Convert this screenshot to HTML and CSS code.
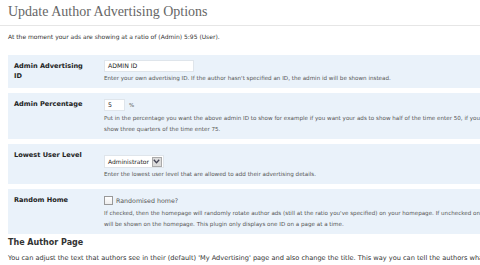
FILE: index.html
```html
<!DOCTYPE html>
<html>
<head>
<meta charset="utf-8">
<link rel="stylesheet" href="styles.css">
</head>
<body>
<div class="wrap">
  <h2 class="title">Update Author Advertising Options</h2>
  <p class="intro">At the moment your ads are showing at a ratio of (Admin) 5:95 (User).</p>
  <div class="form-table">
    <div class="row r1">
      <div class="label">Admin Advertising ID</div>
      <div class="field">
        <div class="input wide">ADMIN ID</div>
        <div class="desc">Enter your own advertising ID. If the author hasn't specified an ID, the admin id will be shown instead.</div>
      </div>
    </div>
    <div class="row r2">
      <div class="label">Admin Percentage</div>
      <div class="field">
        <div class="inline"><div class="input small">5</div><span class="unit">%</span></div>
        <div class="desc">Put in the percentage you want the above admin ID to show for example if you want your ads to show half of the time enter 50, if you want your ads to<br>show three quarters of the time enter 75.</div>
      </div>
    </div>
    <div class="row r3">
      <div class="label">Lowest User Level</div>
      <div class="field">
        <div class="select"><span class="sel-text">Administrator</span><span class="sel-btn"><svg width="7" height="5" viewBox="0 0 7 5"><path d="M0.8 0.8 L3.5 3.8 L6.2 0.8" fill="none" stroke="#445" stroke-width="1.3"/></svg></span></div>
        <div class="desc">Enter the lowest user level that are allowed to add their advertising details.</div>
      </div>
    </div>
    <div class="row r4">
      <div class="label">Random Home</div>
      <div class="field">
        <div class="inline"><span class="checkbox"></span><span class="cb-label">Randomised home?</span></div>
        <div class="desc">If checked, then the homepage will randomly rotate author ads (still at the ratio you've specified) on your homepage. If unchecked only the admin ID<br>will be shown on the homepage. This plugin only displays one ID on a page at a time.</div>
      </div>
    </div>
  </div>
  <h3 class="section">The Author Page</h3>
  <p class="outro">You can adjust the text that authors see in their (default) 'My Advertising' page and also change the title. This way you can tell the authors what to do.</p>
</div>
</body>
</html>
```
FILE: styles.css
```css
html, body {
  margin: 0;
  padding: 0;
  background: #fff;
  overflow: hidden;
}
.wrap {
  width: 472px;
  padding: 0 0 0 8px;
  font-family: "DejaVu Sans", Verdana, sans-serif;
  color: #333;
}
.title {
  margin: 0 0 0 -8px;
  padding: 4px 0 5px 8px;
  width: 480px;
  font-family: "Liberation Serif", "Times New Roman", serif;
  font-weight: normal;
  font-size: 14px;
  line-height: 16px;
  color: #666;
  border-bottom: 1px solid #e6e6e6;
}
.intro {
  margin: 6px 0 0 0;
  font-size: 6px;
  line-height: 10px;
  color: #333;
}
.form-table {
  margin-top: 13px;
  display: flex;
  flex-direction: column;
  gap: 5px;
  width: 520px;
}
.row {
  background: #eaf2fa;
  display: flex;
  padding: 5px 0 4px 6px;
}
.label {
  width: 90px;
  flex: none;
  font-weight: bold;
  font-size: 6.6px;
  line-height: 10px;
  padding-top: 1px;
  color: #222;
}
.r1 .label { width: 78px; margin-right: 12px; }
.field {
  flex: 1;
}
.input {
  background: #fff;
  border: 1px solid #dfe5eb;
  font-size: 6.2px;
  line-height: 10px;
  height: 10px;
  padding: 0 0 0 3px;
  color: #222;
  box-sizing: content-box;
}
.input.wide { width: 85px; }
.input.small { width: 16px; }
.inline {
  display: flex;
  align-items: center;
  height: 13px;
}
.unit {
  font-size: 5.4px;
  margin-left: 4px;
  color: #555;
}
.desc {
  font-size: 5.6px;
  line-height: 11px;
  color: #555;
  margin-top: 1px;
  width: 500px;
}
.r2 .desc { margin-top: 2px; }
.select {
  display: inline-flex;
  align-items: center;
  background: #fff;
  border: 1px solid #dfe5eb;
  height: 11px;
  padding-left: 3px;
}
.sel-text {
  font-size: 6px;
  color: #222;
  margin-right: 3px;
}
.sel-btn {
  width: 8px;
  height: 8px;
  background: #dcdcdc;
  border: 1px solid #aaa;
  display: flex;
  align-items: center;
  justify-content: center;
  margin-right: 1px;
}
.checkbox {
  width: 7px;
  height: 7px;
  border: 1px solid #999;
  background: linear-gradient(#fff, #eee);
  display: inline-block;
}
.cb-label {
  font-size: 6.3px;
  color: #555;
  margin-left: 3px;
}
.section {
  margin: 3px 0 0 0;
  font-size: 8px;
  line-height: 12px;
  font-weight: bold;
  color: #333;
}
.outro {
  margin: 4px 0 0 0;
  font-size: 6.6px;
  line-height: 10px;
  white-space: nowrap;
  color: #333;
}
```
